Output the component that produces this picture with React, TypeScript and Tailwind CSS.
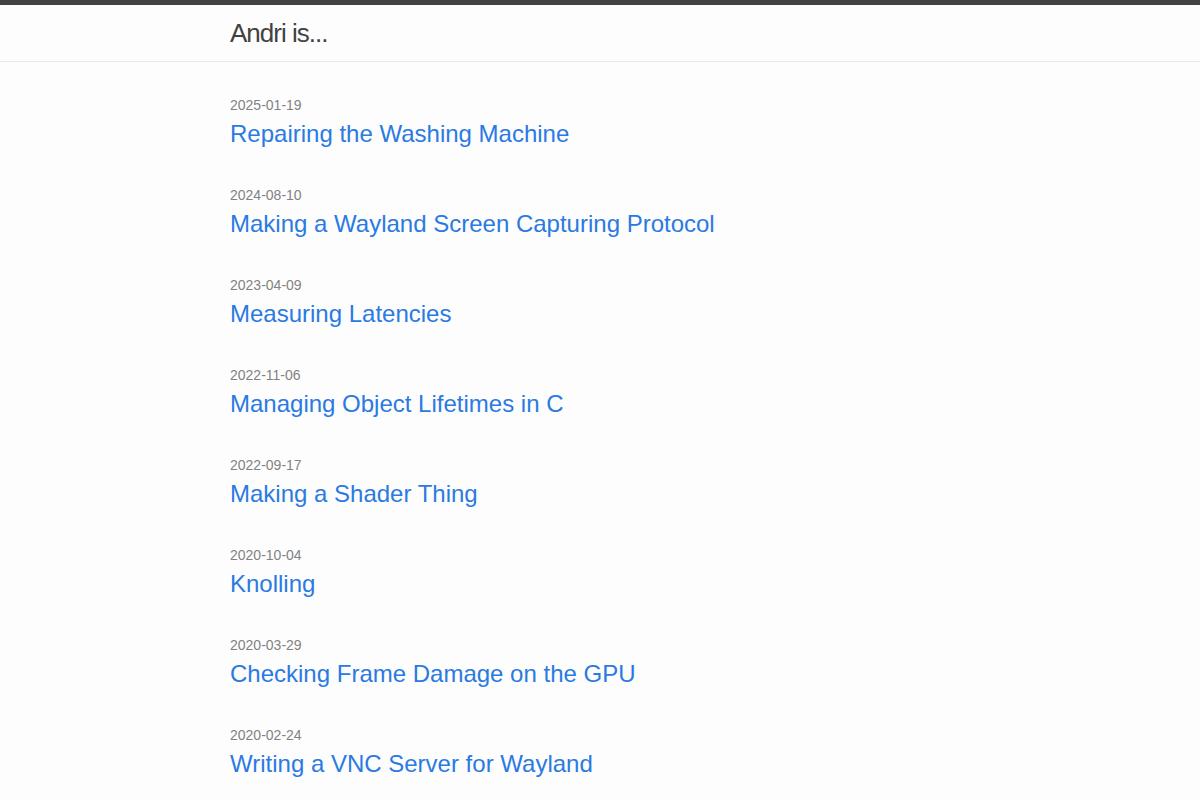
import React from 'react';

const posts = [
  { date: '2025-01-19', title: 'Repairing the Washing Machine' },
  { date: '2024-08-10', title: 'Making a Wayland Screen Capturing Protocol' },
  { date: '2023-04-09', title: 'Measuring Latencies' },
  { date: '2022-11-06', title: 'Managing Object Lifetimes in C' },
  { date: '2022-09-17', title: 'Making a Shader Thing' },
  { date: '2020-10-04', title: 'Knolling' },
  { date: '2020-03-29', title: 'Checking Frame Damage on the GPU' },
  { date: '2020-02-24', title: 'Writing a VNC Server for Wayland' },
];

export default function App() {
  return (
    <div className="min-h-screen overflow-hidden bg-[#fdfdfd] text-[#111] font-['Liberation_Sans',Arial,sans-serif]">
      <header className="border-t-[5px] border-t-[#424242] border-b border-b-[#e8e8e8] min-h-[56px]">
        <div className="max-w-[740px] mx-auto">
          <a href="#" className="block text-[26px] leading-[56px] font-light tracking-[-1px] text-[#424242]">
            Andri is...
          </a>
        </div>
      </header>
      <main className="max-w-[740px] mx-auto pt-[33px]">
        <ul>
          {posts.map((p) => (
            <li key={p.date} className="mb-[33px]">
              <div className="text-[14px] leading-[21px] text-[#828282]">{p.date}</div>
              <h3 className="text-[24px] leading-[36px]">
                <a href="#" className="text-[#2a7ae2]">{p.title}</a>
              </h3>
            </li>
          ))}
        </ul>
      </main>
    </div>
  );
}
